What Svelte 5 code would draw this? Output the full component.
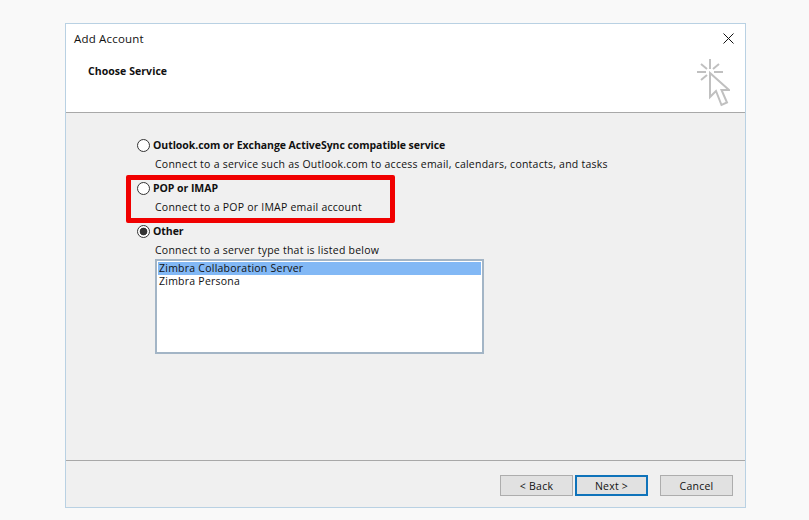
<script lang="ts">
  // Outlook "Add Account" wizard, service selection step.
  const services = [
    { id: 'exchange', label: 'Outlook.com or Exchange ActiveSync compatible service', hint: 'Connect to a service such as Outlook.com to access email, calendars, contacts, and tasks' },
    { id: 'pop', label: 'POP or IMAP', hint: 'Connect to a POP or IMAP email account' },
    { id: 'other', label: 'Other', hint: 'Connect to a server type that is listed below' },
  ];
  const servers = ['Zimbra Collaboration Server', 'Zimbra Persona'];
  let selected = $state('other');
  let server = $state(servers[0]);
</script>

<div class="page">
  <div class="dialog" role="dialog" aria-label="Add Account">
    <header>
      <div class="titlebar">
        <span class="title">Add Account</span>
        <button class="close" aria-label="Close">
          <svg width="11" height="11" viewBox="0 0 11 11"><path d="M0.5 0.5 10.5 10.5 M10.5 0.5 0.5 10.5" stroke="#111" stroke-width="1" fill="none" /></svg>
        </button>
      </div>
      <div class="heading-row">
        <h1>Choose Service</h1>
        <svg class="wizard" width="34" height="50" viewBox="0 0 34 50" fill="none" stroke="#c0c0c0">
          <path d="M14 0V10M14 16V25M1 13H10M18 13H27M5 5 11 10M23 5 17 10M5 21 11 16" stroke-width="2" />
          <path d="M14 14V38L20 32 25.5 46 31 43.5 25.5 31H33Z" stroke-width="2" fill="#fff" />
        </svg>
      </div>
    </header>

    <main>
      <div class="options">
        {#each services as s}
          <label class="option">
            <input type="radio" name="service" value={s.id} bind:group={selected} />
            <span class="radio" class:on={selected === s.id}></span>
            <span class="label">{s.label}</span>
            <span class="hint">{s.hint}</span>
          </label>
        {/each}
        <ul class="list">
          {#each servers as name}
            <li class:active={server === name}><button onclick={() => (server = name)}>{name}</button></li>
          {/each}
        </ul>
        <div class="callout"></div>
      </div>
    </main>

    <footer>
      <button class="btn">&lt; Back</button>
      <button class="btn default">Next &gt;</button>
      <button class="btn cancel">Cancel</button>
    </footer>
  </div>
</div>

<style>
  :global(body) {
    background: #f9f9f9;
  }

  .page {
    width: 809px;
    height: 520px;
    box-sizing: border-box;
    padding: 23px 0 0 65px;
    font-family: "Open Sans", "Noto Sans", sans-serif;
    font-size: 10.5px;
    color: #111;
  }

  .dialog {
    width: 681px;
    height: 485px;
    box-sizing: border-box;
    display: flex;
    flex-direction: column;
    border: 1px solid #b9d1e3;
    background: #f0f0f0;
  }

  header {
    height: 89px;
    box-sizing: border-box;
    background: #fff;
    border-bottom: 1px solid #a8a8a8;
  }

  .titlebar {
    display: flex;
    align-items: center;
    justify-content: space-between;
    height: 28px;
    padding: 0 11px 0 8px;
  }

  .title {
    font-size: 11.5px;
    letter-spacing: 0.18px;
  }

  .close {
    display: flex;
    padding: 0;
    border: 0;
    background: none;
  }

  .heading-row {
    display: flex;
    justify-content: space-between;
    padding: 7px 15px 0 22px;
  }

  h1 {
    margin: 5px 0 0;
    font-size: 10.5px;
    font-weight: 700;
    line-height: 14px;
    letter-spacing: 0.06px;
  }

  .wizard {
    flex: none;
  }

  main {
    flex: 1;
    padding: 23px 0 0 71px;
  }

  .options {
    position: relative;
    width: 520px;
  }

  .option {
    display: grid;
    grid-template-columns: 16px 1fr;
    line-height: 19px;
    margin-bottom: 5px;
  }

  .option input {
    display: none;
  }

  .radio {
    width: 13px;
    height: 13px;
    box-sizing: border-box;
    margin-top: 3px;
    border: 1px solid #333;
    border-radius: 50%;
    background: #fff;
  }

  .radio.on {
    background: radial-gradient(circle, #333 0 3.5px, #fff 4.2px);
  }

  .label {
    font-weight: 700;
    letter-spacing: -0.05px;
  }

  .hint {
    grid-column: 2;
    margin-left: 2px;
    white-space: nowrap;
    letter-spacing: 0.24px;
  }

  .list {
    width: 329px;
    height: 95px;
    box-sizing: border-box;
    margin: -6px 0 0 18px;
    padding: 1px;
    list-style: none;
    border: 2px solid #a3b5c6;
    background: #fff;
  }

  .list button {
    display: block;
    width: 100%;
    height: 13px;
    padding: 0 0 0 1px;
    border: 0;
    background: none;
    font: inherit;
    line-height: 13px;
    color: inherit;
    text-align: left;
    letter-spacing: 0.24px;
  }

  .list .active {
    background: #82b8f5;
  }

  /* red annotation drawn over the screenshot */
  .callout {
    position: absolute;
    left: -11px;
    top: 39px;
    width: 269px;
    height: 48px;
    box-sizing: border-box;
    border: 5px solid #f00000;
    border-radius: 2px;
  }

  footer {
    display: flex;
    gap: 2px;
    height: 47px;
    box-sizing: border-box;
    padding: 14px 12px 0 434px;
    border-top: 1px solid #a8a8a8;
  }

  .btn {
    width: 73px;
    height: 21px;
    box-sizing: border-box;
    padding: 0;
    border: 1px solid #adadad;
    background: #e1e1e1;
    font: inherit;
    color: inherit;
    letter-spacing: 0.24px;
  }

  .default {
    border: 2px solid #0f73ba;
  }

  .cancel {
    margin-left: 10px;
  }
</style>
